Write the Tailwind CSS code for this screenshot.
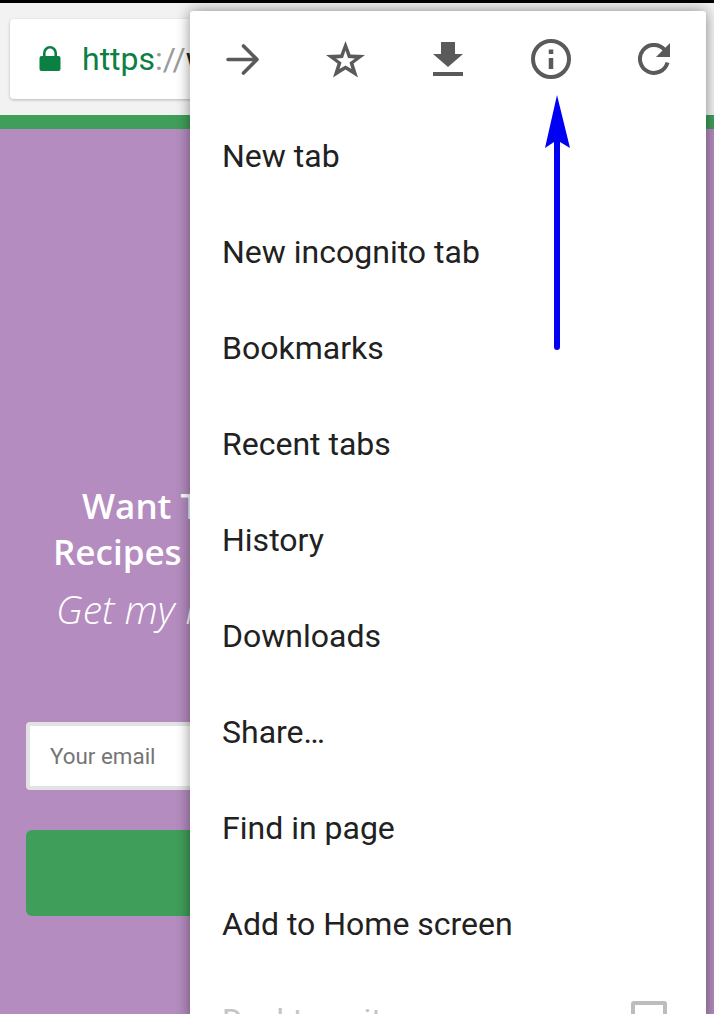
<!DOCTYPE html>
<html lang="en">
  <head>
    <meta charset="UTF-8" />
    <meta name="viewport" content="width=device-width, initial-scale=1.0" />
    <title>Chrome menu</title>
    <script src="https://cdn.jsdelivr.net/npm/@tailwindcss/browser@4"></script>
  </head>
  <body class="bg-[#b48cbf] font-['Roboto',sans-serif]">
    <div class="relative h-[1014px] w-[714px] overflow-hidden">
      <!-- status bar edge -->
      <div class="h-[3px] bg-black"></div>

      <!-- browser toolbar -->
      <header class="h-[112px] bg-[#f2f2f2] pl-[10px] pt-[16px]">
        <div class="flex h-[80px] w-[400px] items-center rounded-[4px] bg-white pl-[29px] shadow-[0_1px_3px_rgba(0,0,0,0.25)]">
          <svg class="h-[28px] w-[22px]" viewBox="0 0 22 28">
            <path fill="#0b8043" d="M4 11V8a7 7 0 0 1 14 0v3h1.500a2 2 0 0 1 2 2v11a2 2 0 0 1-2 2h-17a2 2 0 0 1-2-2V13a2 2 0 0 1 2-2zm2.600 0h8.800V8a4.400 4.400 0 0 0-8.800 0z" />
          </svg>
          <span class="ml-[21px] whitespace-nowrap text-[32px] leading-none text-[#0b8043]">https<span class="text-[#9a9a9a]">://</span><span class="text-[#222]">www</span></span>
        </div>
      </header>
      <div class="h-[14px] bg-[#3f9e59]"></div>

      <!-- page behind the menu -->
      <main class="px-[26px]">
        <div class="pl-[56px] pt-[354px] text-[35px] leading-[46px] font-semibold whitespace-nowrap text-white font-['Open_Sans',sans-serif]">Want To</div>
        <div class="pl-[27px] text-[35px] leading-[46px] font-semibold whitespace-nowrap text-white font-['Open_Sans',sans-serif]">Recipes</div>
        <div class="mt-[11px] pl-[30px] text-[39px] leading-[46px] font-light italic whitespace-nowrap text-white font-['Open_Sans',sans-serif]">Get my Free</div>
        <div class="mt-[90px] flex h-[68px] w-[300px] items-center rounded-[4px] border-[4px] border-[#e2e2e2] bg-white pt-[2px] pl-[20px] text-[22.4px] text-[#757575]">Your email</div>
        <div class="mt-[40px] h-[86px] w-[300px] rounded-[6px] bg-[#3f9e59]"></div>
      </main>

      <!-- overflow menu -->
      <nav class="absolute top-[11px] left-[190px] h-[1010px] w-[516px] rounded-t-[3px] bg-white shadow-[0_0_14px_rgba(0,0,0,0.45)]">
        <div class="mb-px flex h-[96px] items-center pl-[36px] text-[#5a5a5a]">
          <svg class="h-[33px] w-[33px]" viewBox="0 0 33 33" fill="none" stroke="currentColor" stroke-width="3.600" stroke-linecap="round" stroke-linejoin="round">
            <path d="M2 16.500h29M17.500 3 31 16.500 17.500 30" />
          </svg>
          <svg class="ml-[67px] h-[37px] w-[39px]" viewBox="0 0 39 37">
            <path fill="currentColor" fill-rule="evenodd" d="M19.500 0 24.500 13.500 39 14 27.500 22.500 32 36.500 19.500 28.500 7 36.500 11.500 22.500 0 14 14.500 13.500zM19.500 9.500 17 17 10 17.500 15.500 21.500 13.500 28 19.500 24.500 25.500 28 23.500 21.500 29 17.500 22 17z" />
          </svg>
          <svg class="ml-[68px] h-[34px] w-[30px]" viewBox="0 0 30 34" fill="currentColor">
            <path d="M8 0h14v12h8L15 25 0 12h8zM0 30h30v4H0z" />
          </svg>
          <svg class="ml-[68px] h-[40px] w-[40px]" viewBox="0 0 40 40" fill="none" stroke="currentColor" stroke-width="4">
            <circle cx="20" cy="20" r="18" />
            <path d="M20 19v11M20 10.500V15" stroke-width="4.500" />
          </svg>
          <svg class="ml-[67px] h-[32px] w-[32px]" viewBox="0 0 32 32" fill="none">
            <path stroke="currentColor" stroke-width="4" d="M26.500 6.700A14 14 0 1 0 29.500 19.500" />
            <path fill="currentColor" d="M32 0v14H18z" />
          </svg>
        </div>
        <ul class="text-[32px] leading-[96px] text-[#212121]">
          <li class="pl-[32px]">New tab</li>
          <li class="pl-[32px]">New incognito tab</li>
          <li class="pl-[32px]">Bookmarks</li>
          <li class="pl-[32px]">Recent tabs</li>
          <li class="pl-[32px]">History</li>
          <li class="pl-[32px]">Downloads</li>
          <li class="pl-[32px]">Share…</li>
          <li class="pl-[32px]">Find in page</li>
          <li class="pl-[32px]">Add to Home screen</li>
          <li class="flex items-center justify-between pr-[39px] pl-[32px] text-[#c4c4c4]">
            <span>Desktop site</span>
            <span class="h-[38px] w-[36px] rounded-[3px] border-[4px] border-[#bdbdbd]"></span>
          </li>
        </ul>
      </nav>

      <!-- annotation arrow -->
      <svg class="absolute top-[95px] left-[540px] h-[260px] w-[34px]" viewBox="0 0 34 260">
        <path fill="#0000f5" d="M17 0 30 53 20 47V252a3 3 0 0 1-6 0V47L5 53z" />
      </svg>
    </div>
  </body>
</html>
